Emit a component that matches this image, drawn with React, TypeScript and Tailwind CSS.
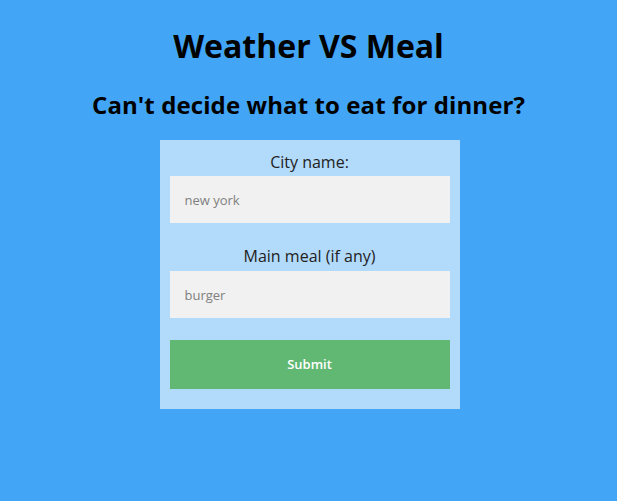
export default function App() {
  return (
    <div className="min-h-[501px] w-full bg-[#42a5f5] flex flex-col items-center pt-[24px]" style={{ fontFamily: '"Open Sans", "Noto Sans", sans-serif' }}>
      <h1 className="text-[32px] font-bold text-black leading-[44px]">Weather VS Meal</h1>
      <h2 className="mt-[21px] text-[24px] font-bold text-black leading-[32px] tracking-[0.1px]">Can't decide what to eat for dinner?</h2>
      <form className="mt-[19px] ml-[2px] w-[300px] bg-[#b2dafb] px-[10px] pt-[10px] pb-[20px] flex flex-col items-stretch" onSubmit={(e) => e.preventDefault()}>
        <label className="text-center text-[16px] leading-[24px] text-[#222] mb-[2px]">City name:</label>
        <input className="h-[47px] bg-[#f1f1f1] px-[15px] text-[13px] placeholder:text-[#808080] outline-none" placeholder="new york" />
        <label className="mt-[21px] text-center text-[16px] leading-[24px] text-[#222] mb-[3px]">Main meal (if any)</label>
        <input className="h-[47px] bg-[#f1f1f1] px-[15px] text-[13px] placeholder:text-[#808080] outline-none" placeholder="burger" />
        <button type="submit" className="mt-[22px] h-[49px] bg-[#61b872] text-white text-[13px] font-semibold">Submit</button>
      </form>
    </div>
  );
}
